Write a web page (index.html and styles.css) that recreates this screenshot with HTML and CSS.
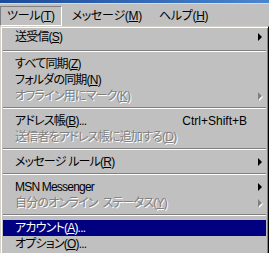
FILE: index.html
```html
<!DOCTYPE html>
<html lang="ja">
<head>
  <meta charset="UTF-8">
  <title>ツール メニュー</title>
  <link rel="stylesheet" href="styles.css">
</head>
<body>

  <div class="titlebar"></div>

  <div class="menubar">
    <span class="bar-item pressed">ツール(<u>T</u>)</span>
    <span class="bar-item">メッセージ(<u>M</u>)</span>
    <span class="bar-item">ヘルプ(<u>H</u>)</span>
  </div>

  <!-- ツール メニュー -->
  <div class="dropdown">
    <div class="item sub">送受信(<u>S</u>)<i class="arrow"></i></div>
    <div class="sep first"></div>
    <div class="item">すべて同期(<u>Z</u>)</div>
    <div class="item">フォルダの同期(<u>N</u>)</div>
    <div class="item sub off">オフライン用にマーク(<u>K</u>)<i class="arrow"></i></div>
    <div class="sep"></div>
    <div class="item">アドレス帳(<u>B</u>)...<span class="key">Ctrl+Shift+B</span></div>
    <div class="item off">送信者をアドレス帳に追加する(<u>D</u>)</div>
    <div class="sep"></div>
    <div class="item sub">メッセージ ルール(<u>R</u>)<i class="arrow"></i></div>
    <div class="sep"></div>
    <div class="item sub">MSN Messenger<i class="arrow"></i></div>
    <div class="item sub off">自分のオンライン&nbsp; ステータス(<u>Y</u>)<i class="arrow"></i></div>
    <div class="sep"></div>
    <div class="item active">アカウント(<u>A</u>)...</div>
    <div class="item">オプション(<u>O</u>)...</div>
  </div>

</body>
</html>
```

FILE: styles.css
```css
body {
  margin: 0;
  width: 269px;
  height: 253px;
  overflow: hidden;
  background: #c0c0c0;
  font-family: "Liberation Sans", "Noto Sans CJK JP", sans-serif;
  font-size: 12px;
  font-feature-settings: "palt";
  letter-spacing: -0.8px;
  color: #000;
}
u {
  text-decoration: underline;
  text-underline-offset: 1px;
}
.titlebar {
  height: 3px;
  background: linear-gradient(to right, #1a4a9a, #4a86d0);
  border-bottom: 1px solid #dcdcdc;
}
/* メニューバー */
.menubar {
  display: flex;
  height: 20px;
  padding-top: 2px;
  letter-spacing: -0.3px;
}
.bar-item {
  padding: 0 6px 0 9px;
  line-height: 18px;
  border: 1px solid transparent;
}
.bar-item.pressed {
  border-color: #808080 #fff #fff #808080;
  padding: 0 6px;
}
/* ドロップダウン */
.dropdown {
  box-sizing: border-box;
  width: 269px;
  border: 1px solid;
  border-color: #d4d0c8 #000 #000 #d4d0c8;
  box-shadow: inset 1px 1px 0 #fff, inset -1px -1px 0 #808080;
  padding: 2px;
}
.item {
  position: relative;
  display: flex;
  height: 16px;
  line-height: 16px;
  padding-left: 12px;
  white-space: nowrap;
}
.item.off {
  color: #808080;
  text-shadow: 1px 1px 0 #fff;
}
.item.active {
  background: #000080;
  color: #fff;
}
.key {
  margin-left: auto;
  padding-right: 19px;
  letter-spacing: 0;
}
.arrow {
  position: absolute;
  right: 4px;
  top: 4px;
  width: 0;
  height: 0;
  border-style: solid;
  border-width: 4px 0 4px 4px;
  border-color: transparent transparent transparent #000;
}
.off .arrow {
  border-left-color: #808080;
  filter: drop-shadow(1px 1px 0 #fff);
}
.sep {
  height: 0;
  margin: 3px 0 4px;
  border-top: 1px solid #808080;
  border-bottom: 1px solid #fff;
}
.sep.first {
  margin: 5px 0 4px;
}
```
